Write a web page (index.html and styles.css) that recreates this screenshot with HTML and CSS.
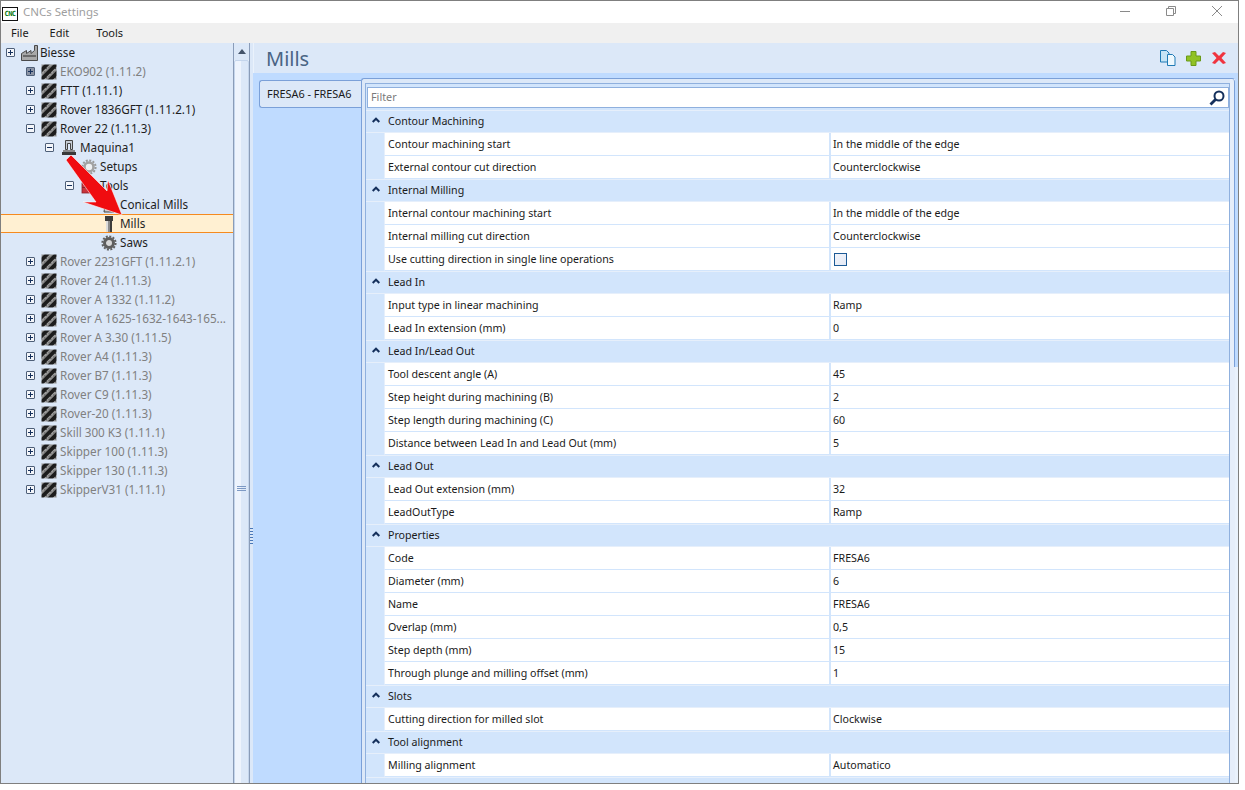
FILE: index.html
```html
<!DOCTYPE html>
<html lang="en">
<head>
<meta charset="utf-8">
<title>CNCs Settings</title>
<link rel="stylesheet" href="styles.css">
</head>
<body>
<svg class="defs" width="0" height="0" aria-hidden="true">
  <defs>
    <pattern id="hatch" width="6.500" height="6.500" patternUnits="userSpaceOnUse" patternTransform="rotate(-45)">
      <rect width="6.500" height="6.500" fill="#1c1c1c"/>
      <rect y="0" width="6.500" height="2.600" fill="#9c9c9c"/>
      <rect x="0" y="0" width="1" height="1" fill="#333"/>
      <rect x="3" y="1" width="1" height="1" fill="#444"/>
    </pattern>
    <symbol id="i-machine" viewBox="0 0 16 16"><rect x="0.500" y="0.500" width="15" height="15" fill="url(#hatch)"/></symbol>
    <symbol id="i-gear" viewBox="0 0 16 16">
      <circle cx="8" cy="8" r="4.500" fill="#eef0f2" stroke="#a2a2a2" stroke-width="2.600"/>
      <circle cx="8" cy="8" r="6.600" fill="none" stroke="#9a9a9a" stroke-width="2" stroke-dasharray="2 1.460"/>
    </symbol>
    <symbol id="i-saw" viewBox="0 0 16 16">
      <circle cx="8" cy="8" r="4.500" fill="#d8d8d8" stroke="#5e5e5e" stroke-width="3"/>
      <circle cx="8" cy="8" r="6.600" fill="none" stroke="#606060" stroke-width="2" stroke-dasharray="2 1.460"/>
    </symbol>
    <symbol id="i-factory" viewBox="0 0 17 16">
      <path d="M0.500 8.500 L5.500 5.500 V8.500 L10 5.500 V8.500 L13.500 5.500 V0.500 H16.500 V15.500 H0.500 Z" fill="#a8a8a8" stroke="#4a4a4a"/>
      <rect x="2" y="10" width="13" height="2" fill="#6a6a6a"/>
    </symbol>
    <symbol id="i-cnc" viewBox="0 0 16 16">
      <path d="M4.500 0.500 H11.500 V9.500 H9.500 V3.500 H6.500 V9.500 H4.500 Z" fill="#c6cdd6" stroke="#444" stroke-width="1"/>
      <rect x="2" y="10" width="12" height="2" fill="#8a8a8a"/>
      <rect x="1" y="12" width="14" height="3" fill="#3a3a3a"/>
    </symbol>
    <symbol id="i-folder" viewBox="0 0 16 16">
      <path d="M1 5 L4 2 H11 V5" fill="#e0555c" stroke="#8b2228" stroke-width="0.800"/>
      <rect x="1" y="5" width="14" height="10" fill="#c9343c" stroke="#8b2228" stroke-width="0.800"/>
      <rect x="1" y="9" width="14" height="1" fill="#8b2228"/>
    </symbol>
    <symbol id="i-cone" viewBox="0 0 16 16">
      <path d="M5 1H11L13 15H3Z" fill="#c8c8c8" stroke="#444"/>
    </symbol>
    <symbol id="i-mill" viewBox="0 0 16 16">
      <rect x="4" y="0" width="8" height="5" fill="#3c3c3c"/>
      <rect x="5" y="5" width="6" height="11" fill="#8c8c8c"/>
      <rect x="5" y="5" width="2" height="11" fill="#dcdcdc"/>
      <rect x="9" y="5" width="2" height="11" fill="#3c3c3c"/>
    </symbol>
    <symbol id="i-chev" viewBox="0 0 8 6"><path d="M0.700 5L4 1.700L7.300 5" fill="none" stroke="#15305c" stroke-width="2"/></symbol>
  </defs>
</svg>
<div class="window">
  <header class="titlebar">
    <div class="appicon"><span>CNC</span></div>
    <div class="apptitle">CNCs Settings</div>
    <div class="winbtns">
      <svg width="10" height="10" viewBox="0 0 10 10"><path d="M0 5.500H10" stroke="#8a8a8a" fill="none"/></svg>
      <svg width="10" height="10" viewBox="0 0 10 10"><path d="M0.500 2.500h7v7h-7z M2.500 2.500v-2h7v7h-2" stroke="#8a8a8a" fill="none"/></svg>
      <svg width="10" height="10" viewBox="0 0 10 10"><path d="M0 0L10 10M10 0L0 10" stroke="#8a8a8a" fill="none"/></svg>
    </div>
  </header>
  <nav class="menubar">
    <span class="m-file">File</span><span class="m-edit">Edit</span><span class="m-tools">Tools</span>
  </nav>
  <main class="body">
    <aside class="tree">
      <div class="node d0"><i class="exp plus"></i><svg class="ico fac"><use href="#i-factory"/></svg><span>Biesse</span></div>
      <div class="node d1 dim"><i class="exp plus dark"></i><svg class="ico"><use href="#i-machine"/></svg><span>EKO902 (1.11.2)</span></div>
      <div class="node d1"><i class="exp plus"></i><svg class="ico"><use href="#i-machine"/></svg><span>FTT (1.11.1)</span></div>
      <div class="node d1"><i class="exp plus"></i><svg class="ico"><use href="#i-machine"/></svg><span>Rover 1836GFT (1.11.2.1)</span></div>
      <div class="node d1"><i class="exp"></i><svg class="ico"><use href="#i-machine"/></svg><span>Rover 22 (1.11.3)</span></div>
      <div class="node d2"><i class="exp"></i><svg class="ico"><use href="#i-cnc"/></svg><span>Maquina1</span></div>
      <div class="node noexp"><svg class="ico"><use href="#i-gear"/></svg><span>Setups</span></div>
      <div class="node d3"><i class="exp"></i><svg class="ico"><use href="#i-folder"/></svg><span>Tools</span></div>
      <div class="node d4"><svg class="ico"><use href="#i-cone"/></svg><span>Conical Mills</span></div>
      <div class="node d4 sel"><svg class="ico"><use href="#i-mill"/></svg><span>Mills</span></div>
      <div class="node d4"><svg class="ico"><use href="#i-saw"/></svg><span>Saws</span></div>
      <div class="node d1 dim"><i class="exp plus"></i><svg class="ico"><use href="#i-machine"/></svg><span>Rover 2231GFT (1.11.2.1)</span></div>
      <div class="node d1 dim"><i class="exp plus"></i><svg class="ico"><use href="#i-machine"/></svg><span>Rover 24 (1.11.3)</span></div>
      <div class="node d1 dim"><i class="exp plus"></i><svg class="ico"><use href="#i-machine"/></svg><span>Rover A 1332 (1.11.2)</span></div>
      <div class="node d1 dim"><i class="exp plus"></i><svg class="ico"><use href="#i-machine"/></svg><span>Rover A 1625-1632-1643-165...</span></div>
      <div class="node d1 dim"><i class="exp plus"></i><svg class="ico"><use href="#i-machine"/></svg><span>Rover A 3.30 (1.11.5)</span></div>
      <div class="node d1 dim"><i class="exp plus"></i><svg class="ico"><use href="#i-machine"/></svg><span>Rover A4 (1.11.3)</span></div>
      <div class="node d1 dim"><i class="exp plus"></i><svg class="ico"><use href="#i-machine"/></svg><span>Rover B7 (1.11.3)</span></div>
      <div class="node d1 dim"><i class="exp plus"></i><svg class="ico"><use href="#i-machine"/></svg><span>Rover C9 (1.11.3)</span></div>
      <div class="node d1 dim"><i class="exp plus"></i><svg class="ico"><use href="#i-machine"/></svg><span>Rover-20 (1.11.3)</span></div>
      <div class="node d1 dim"><i class="exp plus"></i><svg class="ico"><use href="#i-machine"/></svg><span>Skill 300 K3 (1.11.1)</span></div>
      <div class="node d1 dim"><i class="exp plus"></i><svg class="ico"><use href="#i-machine"/></svg><span>Skipper 100 (1.11.3)</span></div>
      <div class="node d1 dim"><i class="exp plus"></i><svg class="ico"><use href="#i-machine"/></svg><span>Skipper 130 (1.11.3)</span></div>
      <div class="node d1 dim"><i class="exp plus"></i><svg class="ico"><use href="#i-machine"/></svg><span>SkipperV31 (1.11.1)</span></div>
    </aside>
    <div class="vscroll">
      <div class="sb-up"><svg width="8" height="5" viewBox="0 0 8 5"><path d="M4 0L8 5H0Z" fill="#44546a"/></svg></div>
      <div class="sb-thumb"><div class="grip"></div></div>
    </div>
    <div class="splitter"><div class="dots"></div></div>
    <section class="panel">
      <div class="panelhead">
        <h1>Mills</h1>
        <div class="actions">
          <svg width="16" height="16" viewBox="0 0 16 16"><path d="M0.500 0.500h6l2.500 2.500v9h-8.500z" fill="#c6e4f5" stroke="#1f7ab5"/><path d="M7.500 4.500h5l2.500 2.500v8.500h-7.500z" fill="#eef8fd" stroke="#1f7ab5"/></svg>
          <svg width="15" height="15" viewBox="0 0 15 15"><path d="M5 .5h5v4.500h4.500v5h-4.500v4.500h-5v-4.500h-4.500v-5h4.500z" fill="#90c224" stroke="#6a9a18"/></svg>
          <svg class="x-ico" width="14" height="12" viewBox="0 0 14 12"><path d="M0 1L3 0L7 4L11 0L14 1L9.500 6L14 11L11 12L7 8L3 12L0 11L4.500 6Z" fill="#f0343f"/></svg>
        </div>
      </div>
      <div class="tabs">
        <div class="tabcol"><div class="tab">FRESA6 - FRESA6</div></div>
        <div class="tabpage">
          <div class="inner">
            <div class="filter"><span>Filter</span>
              <svg width="16" height="16" viewBox="0 0 16 16"><circle cx="10" cy="6" r="4.500" fill="none" stroke="#15305c" stroke-width="2"/><path d="M6.500 9.500L1.500 14.500" stroke="#15305c" stroke-width="2.800"/></svg>
            </div>
            <div class="grid">
              <div class="ghead"><svg class="chev"><use href="#i-chev"/></svg><span>Contour Machining</span></div>
              <div class="row"><div class="k">Contour machining start</div><div class="v">In the middle of the edge</div></div>
              <div class="row"><div class="k">External contour cut direction</div><div class="v">Counterclockwise</div></div>
              <div class="ghead"><svg class="chev"><use href="#i-chev"/></svg><span>Internal Milling</span></div>
              <div class="row"><div class="k">Internal contour machining start</div><div class="v">In the middle of the edge</div></div>
              <div class="row"><div class="k">Internal milling cut direction</div><div class="v">Counterclockwise</div></div>
              <div class="row"><div class="k">Use cutting direction in single line operations</div><div class="v"><i class="check"></i></div></div>
              <div class="ghead"><svg class="chev"><use href="#i-chev"/></svg><span>Lead In</span></div>
              <div class="row"><div class="k">Input type in linear machining</div><div class="v">Ramp</div></div>
              <div class="row"><div class="k">Lead In extension (mm)</div><div class="v">0</div></div>
              <div class="ghead"><svg class="chev"><use href="#i-chev"/></svg><span>Lead In/Lead Out</span></div>
              <div class="row"><div class="k">Tool descent angle (A)</div><div class="v">45</div></div>
              <div class="row"><div class="k">Step height during machining (B)</div><div class="v">2</div></div>
              <div class="row"><div class="k">Step length during machining (C)</div><div class="v">60</div></div>
              <div class="row"><div class="k">Distance between Lead In and Lead Out (mm)</div><div class="v">5</div></div>
              <div class="ghead"><svg class="chev"><use href="#i-chev"/></svg><span>Lead Out</span></div>
              <div class="row"><div class="k">Lead Out extension (mm)</div><div class="v">32</div></div>
              <div class="row"><div class="k">LeadOutType</div><div class="v">Ramp</div></div>
              <div class="ghead"><svg class="chev"><use href="#i-chev"/></svg><span>Properties</span></div>
              <div class="row"><div class="k">Code</div><div class="v">FRESA6</div></div>
              <div class="row"><div class="k">Diameter (mm)</div><div class="v">6</div></div>
              <div class="row"><div class="k">Name</div><div class="v">FRESA6</div></div>
              <div class="row"><div class="k">Overlap (mm)</div><div class="v">0,5</div></div>
              <div class="row"><div class="k">Step depth (mm)</div><div class="v">15</div></div>
              <div class="row"><div class="k">Through plunge and milling offset (mm)</div><div class="v">1</div></div>
              <div class="ghead"><svg class="chev"><use href="#i-chev"/></svg><span>Slots</span></div>
              <div class="row"><div class="k">Cutting direction for milled slot</div><div class="v">Clockwise</div></div>
              <div class="ghead"><svg class="chev"><use href="#i-chev"/></svg><span>Tool alignment</span></div>
              <div class="row"><div class="k">Milling alignment</div><div class="v">Automatico</div></div>
              <div class="ghead"></div>
            </div>
          </div>
          <div class="sidestrip"><div class="sidethumb"></div></div>
        </div>
        <div class="edge"></div>
      </div>
    </section>
    <svg class="arrow" width="70" height="72" viewBox="60 150 70 72"><path d="M66 160 L71 155 L107 191 L108 180 L122 215 L83 202 L96 202 Z" fill="#f00c10" stroke="#fff" stroke-opacity=".55" stroke-width="1"/></svg>
  </main>
</div>
</body>
</html>
```
FILE: styles.css
```css
* { box-sizing: border-box; }
html, body { margin: 0; padding: 0; background: #fff; }
body { width: 1245px; height: 790px; overflow: hidden; font-family: "Noto Sans", "Open Sans", sans-serif; font-size: 11px; color: #1a1a1a; }
.defs { position: absolute; }
.window { width: 1239px; height: 784px; border: 1px solid #7f7f7f; display: flex; flex-direction: column; overflow: hidden; }
.titlebar { height: 22px; flex: none; background: #fff; display: flex; align-items: center; }
.appicon { width: 16px; height: 14px; margin-left: 1px; margin-top: 3px; background: #111; padding: 1px; display: flex; }
.appicon span { flex: 1; background: #fff; color: #0a7a18; font: bold 7px/12px "DejaVu Sans Mono", monospace; text-align: center; letter-spacing: -0.5px; }
.apptitle { margin-left: 5px; margin-bottom: 2px; font-size: 11.500px; color: #9e9e9e; }
.winbtns { margin-left: auto; display: flex; gap: 36px; margin-right: 16px; margin-bottom: 3px; align-items: center; }
.menubar { height: 20px; flex: none; background: #f0f0f0; display: flex; align-items: center; font-size: 11px; color: #1a1a1a; }
.menubar span { margin-bottom: 2px; }
.m-file { margin-left: 10px; }
.m-edit { margin-left: 21px; }
.m-tools { margin-left: 27px; }
.body { flex: 1; display: flex; position: relative; min-height: 0; background: #dce8f8; }
.tree { width: 233px; flex: none; background: #dce8f8; border-right: 1px solid #8a9cb8; overflow: hidden; }
.node { height: 19px; display: flex; align-items: center; white-space: nowrap; font-size: 11.700px; color: #1e1e1e; }
.node span { margin-left: 3px; margin-bottom: 2px; }
.dim { color: #808080; }
.d0 { padding-left: 5px; }
.d1 { padding-left: 25px; }
.d2 { padding-left: 44px; }
.d3 { padding-left: 64px; }
.d4 { padding-left: 100px; }
.noexp { padding-left: 80px; }
.sel { background: #fff0d2; box-shadow: inset 0 1px 0 #f58a1f, inset 0 -1px 0 #f58a1f; }
.exp { width: 9px; height: 9px; flex: none; border: 1px solid #4e5f78; border-radius: 1px; background: #f4f6fa; margin-right: 6px; position: relative; }
.exp::before { content: ""; position: absolute; left: 1px; right: 1px; top: 3px; height: 1px; background: #15305c; }
.exp.plus::after { content: ""; position: absolute; top: 1px; bottom: 1px; left: 3px; width: 1px; background: #15305c; }
.exp.dark { background: #8c94a4; }
.d2 .exp, .d3 .exp { margin-right: 7px; }
.ico { width: 16px; height: 16px; flex: none; }
.fac { width: 17px; }
.d0 span { margin-left: 2px; }
.vscroll { width: 16px; flex: none; border-right: 1px solid #8a9cb8; background: #e6eefa; display: flex; flex-direction: column; overflow: hidden; }
.sb-up { height: 17px; flex: none; display: flex; align-items: center; justify-content: center; background: #dce8f8; }
.sb-thumb { flex: none; height: 856px; border: 1px solid #c4d5ec; border-radius: 2px 2px 0 0; background: linear-gradient(90deg, #eef4fd 0 45%, #dce8f8 45%); display: flex; align-items: center; justify-content: center; }
.grip { width: 9px; height: 5px; border-top: 1px solid #7d99c4; border-bottom: 1px solid #7d99c4; position: relative; }
.grip::after { content: ""; position: absolute; left: 0; right: 0; top: 1px; height: 1px; background: #7d99c4; }
.splitter { width: 3px; flex: none; background: #dce8f8; position: relative; }
.dots { position: absolute; top: 485px; left: 0; width: 3px; height: 18px; background: repeating-linear-gradient(180deg, #4a78b8 0 1px, transparent 1px 3px); }
.panel { flex: 1; min-width: 0; display: flex; flex-direction: column; background: #bfdbff; }
.panelhead { height: 30px; flex: none; background: #dce8f8; border-left: 1px solid #eaf2fc; display: flex; align-items: center; padding-left: 12px; }
.panelhead h1 { margin: 0; font-weight: 400; font-size: 20px; color: #4a6484; }
.actions { margin-left: auto; display: flex; gap: 10px; align-items: center; margin-right: 12px; }
.x-ico { margin-left: 1px; }
.tabs { flex: 1; display: flex; padding: 5px 0 0 6px; min-height: 0; position: relative; }
.tabcol { width: 102px; flex: none; padding-top: 2px; }
.tab { height: 28px; line-height: 26px; background: #dce8f8; border: 1px solid #7ba0d8; border-right: none; border-radius: 3px 0 0 3px; padding-left: 7px; font-size: 10.900px; color: #1a1a1a; }
.tabpage { flex: 1; min-width: 0; background: #dce8f8; border-left: 1px solid #7ba0d8; border-top: 1px solid #7ba0d8; border-radius: 3px 3px 0 0; display: flex; padding: 4px 0 0 3px; }
.edge { width: 3px; flex: none; margin-top: -5px; background: linear-gradient(#bfdbff 0 294px, #eaf2fc 294px); }
.inner { flex: 1; min-width: 0; border-left: 1px solid #8fb0de; border-top: 1px solid #8fb0de; border-right: 1px solid #8fb0de; background: #d2e5fc; display: flex; flex-direction: column; }
.filter { height: 21px; flex: none; background: #fff; border: 1px solid #8fb0de; margin: 3px 0 2px 1px; display: flex; align-items: center; justify-content: space-between; padding: 0 3px; color: #7a7a7a; font-size: 10.800px; }
.filter span { margin-bottom: 2px; }
.grid { flex: 1; min-height: 0; overflow: hidden; background: #d2e5fc; }
.ghead { height: 23px; padding: 0 0 1px 6px; display: flex; align-items: center; gap: 8px; background: #d2e5fc; border-top: 1px solid #e6effb; border-bottom: 1px solid #e6effb; font-size: 10.650px; color: #1a1a1a; }
.chev { width: 8px; height: 6px; flex: none; margin-bottom: 2px; }
.row { height: 23px; margin-left: 18px; display: flex; background: #fff; border-bottom: 1px solid #d2e5fc; border-left: 1px solid #e6effb; font-size: 10.650px; color: #1a1a1a; }
.k { width: 446px; flex: none; padding-left: 3px; line-height: 23px; border-right: 2px solid #d2e5fc; white-space: nowrap; overflow: hidden; }
.v { flex: 1; padding-left: 2px; line-height: 21px; display: flex; align-items: center; }
.check { width: 13px; height: 13px; margin-left: 1px; border: 1px solid #1c5a96; background: linear-gradient(135deg, #f3f5fb, #e2e8f4); }
.sidestrip { width: 5px; flex: none; margin-top: -4px; background: #e6eefa; }
.sidethumb { height: 288px; border-right: 1px solid #7ba0d8; border-radius: 0 3px 0 0; }
.arrow { position: absolute; left: 59px; top: 107px; }
```
